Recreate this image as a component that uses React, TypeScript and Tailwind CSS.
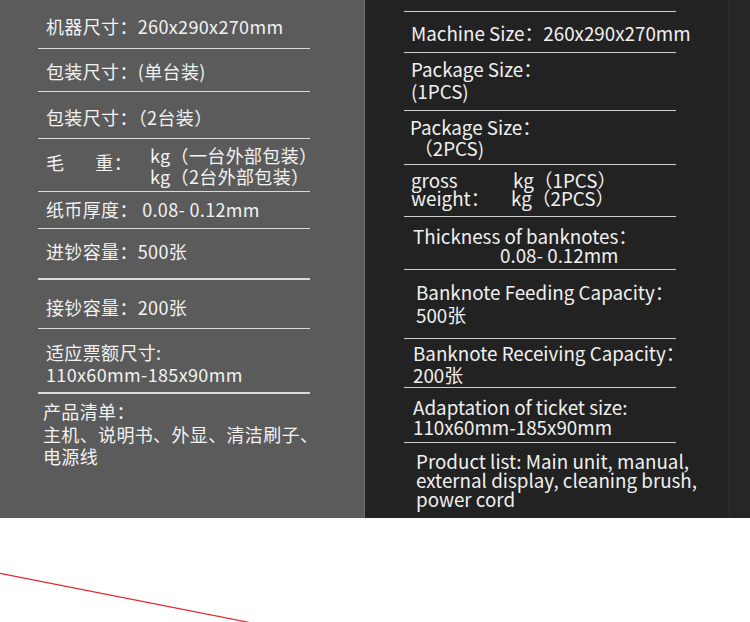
const font = { fontFamily: '"Noto Sans CJK SC", "Noto Sans", sans-serif' };

function LeftSpecs() {
  return (
    <div className="relative h-[518px] w-[365px] shrink-0 bg-[#5b5b5b] border-r border-[#6e6e6e]">
      <div className="ml-[38px] w-[272px] text-[18px] tracking-[0.35px] text-[#f2f2f2] whitespace-nowrap">
        <div className="h-[49px] border-b border-[#d9d9d9] pl-[8px] pt-[15px] leading-[22px]">
          机器尺寸：260x290x270mm
        </div>
        <div className="h-[43px] border-b border-[#d9d9d9] pl-[8px] pt-[11px] leading-[22px]">
          包装尺寸：(单台装)
        </div>
        <div className="h-[47px] border-b border-[#d9d9d9] pl-[8px] pt-[14px] leading-[22px]">
          包装尺寸：（2台装）
        </div>
        <div className="flex h-[53px] border-b border-[#d9d9d9] pl-[8px] pt-[6px] leading-[21px]">
          <div className="flex w-[104px] shrink-0 pt-[7px]">
            <span>毛</span>
            <span className="ml-[31px]">重：</span>
          </div>
          <div>
            <div>kg（一台外部包装）</div>
            <div>kg（2台外部包装）</div>
          </div>
        </div>
        <div className="h-[37px] border-b border-[#d9d9d9] pl-[8px] pt-[6px] leading-[22px]">
          纸币厚度： 0.08- 0.12mm
        </div>
        <div className="h-[51px] border-b-2 border-[#d9d9d9] pl-[8px] pt-[11px] leading-[22px]">
          进钞容量：500张
        </div>
        <div className="h-[49px] border-b border-[#d9d9d9] pl-[8px] pt-[16px] leading-[22px]">
          接钞容量：200张
        </div>
        <div className="h-[65px] border-b-2 border-[#d9d9d9] pl-[8px] pt-[12px] leading-[22px]">
          <div>适应票额尺寸:</div>
          <div>110x60mm-185x90mm</div>
        </div>
        <div className="pl-[5px] pt-[6px] leading-[22.5px]">
          <div>产品清单：</div>
          <div>主机、说明书、外显、清洁刷子、</div>
          <div>电源线</div>
        </div>
      </div>
    </div>
  );
}

function RightSpecs() {
  return (
    <div className="flex h-[518px] flex-1 bg-[#222222]">
      <div className="ml-[39px] w-[272px] text-[18.8px] text-[#f0f0f0] whitespace-nowrap">
        <div className="h-[12px] border-b border-[#cfcfcf]" />
        <div className="h-[41px] border-b border-[#cfcfcf] pl-[7px] pt-[10px] leading-[22px]">
          Machine Size：260x290x270mm
        </div>
        <div className="h-[58px] border-b border-[#cfcfcf] pl-[7px] pt-[5px] leading-[22px]">
          <div>Package Size：</div>
          <div>(1PCS)</div>
        </div>
        <div className="h-[54px] border-b border-[#cfcfcf] pl-[6px] pt-[5px] leading-[21px]">
          <div>Package Size：</div>
          <div className="pl-[4px]">（2PCS)</div>
        </div>
        <div className="flex h-[52px] border-b border-[#cfcfcf] pl-[7px] pt-[6px] leading-[18px]">
          <div className="w-[100px]">
            <div>gross</div>
            <div>weight：</div>
          </div>
          <div>
            <div className="pl-[2px]">kg（1PCS）</div>
            <div>kg（2PCS）</div>
          </div>
        </div>
        <div className="h-[53px] border-b border-[#cfcfcf] pl-[9px] pt-[9px] leading-[19px]">
          <div>Thickness of banknotes：</div>
          <div className="pl-[87px]">0.08- 0.12mm</div>
        </div>
        <div className="h-[69px] border-b border-[#cfcfcf] pl-[12px] pt-[10px] leading-[23px]">
          <div>Banknote Feeding Capacity：</div>
          <div>500张</div>
        </div>
        <div className="h-[49px] border-b border-[#cfcfcf] pl-[9px] pt-[3px] leading-[22px]">
          <div>Banknote Receiving Capacity：</div>
          <div>200张</div>
        </div>
        <div className="h-[55px] border-b border-[#cfcfcf] pl-[9px] pt-[9px] leading-[20px]">
          <div>Adaptation of ticket size:</div>
          <div>110x60mm-185x90mm</div>
        </div>
        <div className="pl-[12px] pt-[8px] leading-[19px]">
          <div>Product list: Main unit, manual,</div>
          <div>external display, cleaning brush,</div>
          <div>power cord</div>
        </div>
      </div>
      <div className="ml-auto h-full w-[22px] border-l border-[#2b2c2e] bg-[#252628]" />
    </div>
  );
}

export default function App() {
  return (
    <div className="h-[622px] w-[750px] overflow-hidden bg-white" style={font}>
      <div className="flex">
        <LeftSpecs />
        <RightSpecs />
      </div>
      <div className="h-[104px]">
        <svg width="750" height="104" viewBox="0 0 750 104">
          <line x1="0" y1="55.3" x2="252" y2="105" stroke="#e3262b" strokeWidth="1.2" />
        </svg>
      </div>
    </div>
  );
}
